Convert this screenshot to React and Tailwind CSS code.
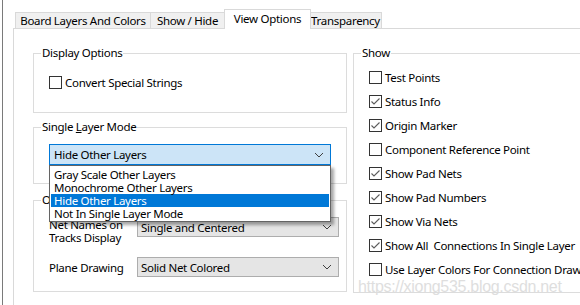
import React from 'react';

const tabs = [
  { label: 'Board Layers And Colors', w: 'w-[136px]' },
  { label: 'Show / Hide', w: 'w-[75px]' },
  { label: 'View Options', w: 'w-[87px]', active: true },
  { label: 'Transparency', w: 'w-[73px]' },
];

const showItems = [
  { label: 'Test Points', checked: false },
  { label: 'Status Info', checked: true },
  { label: 'Origin Marker', checked: true },
  { label: 'Component Reference Point', checked: false },
  { label: 'Show Pad Nets', checked: true },
  { label: 'Show Pad Numbers', checked: true },
  { label: 'Show Via Nets', checked: true },
  { label: 'Show All  Connections In Single Layer', checked: true },
  { label: 'Use Layer Colors For Connection Drawing', checked: false },
];

const layerModes = [
  'Gray Scale Other Layers',
  'Monochrome Other Layers',
  'Hide Other Layers',
  'Not In Single Layer Mode',
];

function Checkbox({ checked }) {
  return (
    <span className="w-[13px] h-[13px] shrink-0 border border-[#333333] bg-white flex items-center justify-center">
      {checked && (
        <svg width="11" height="11" viewBox="0 0 11 11">
          <path d="M1.5 5.5 L4 8 L9.5 2.5" fill="none" stroke="#5c5c5c" strokeWidth="1.1" />
        </svg>
      )}
    </span>
  );
}

function Chevron() {
  return (
    <svg width="10" height="6" viewBox="0 0 10 6" className="shrink-0">
      <path d="M1 1 L5 5 L9 1" fill="none" stroke="#404040" strokeWidth="1" />
    </svg>
  );
}

function Group({ legend, className, children }) {
  return (
    <fieldset className={`border border-[#dcdcdc] ${className}`}>
      <legend className="ml-[7px] px-[1px] leading-[16px] whitespace-nowrap">{legend}</legend>
      {children}
    </fieldset>
  );
}

function Combo({ value, className }) {
  return (
    <div className={`h-[20px] bg-[#e5e5e5] border border-[#adadad] flex items-center justify-between pl-[3px] pr-[6px] ${className}`}>
      <span>{value}</span>
      <Chevron />
    </div>
  );
}

export default function App() {
  return (
    <div className="w-[580px] h-[305px] overflow-hidden bg-white relative font-['Noto_Sans',sans-serif] text-[11.5px] tracking-[-0.3px] leading-[13px] text-black">
      <div className="ml-[2px] h-full border-l border-[#7a7a7a] pl-[10px] pt-[12px]">
        {/* Tabs */}
        <div className="flex ml-[2px] h-[16px] items-end whitespace-nowrap">
          {tabs.map((t) =>
            t.active ? (
              <div
                key={t.label}
                className={`${t.w} h-[20px] -mb-[1px] -mx-[1px] relative z-10 bg-white border border-b-0 border-[#d9d9d9] flex items-center justify-center pb-[2px]`}
              >
                {t.label}
              </div>
            ) : (
              <div
                key={t.label}
                className={`${t.w} h-[16px] bg-[#f0f0f0] border border-b-0 border-[#d9d9d9] -ml-[1px] first:ml-0 flex items-center justify-center`}
              >
                {t.label}
              </div>
            )
          )}
        </div>

        {/* Panel */}
        <div className="border-l border-t border-[#d9d9d9] h-[400px] pl-[19px] pt-[16px] flex gap-[6px]">
          {/* Left column */}
          <div className="w-[314px] shrink-0 flex flex-col">
            <Group legend="Display Options" className="h-[68px]">
              <div className="flex items-center gap-[3px] pl-[15px] mt-[15px]">
                <Checkbox checked={false} />
                <span>Convert Special Strings</span>
              </div>
            </Group>

            <Group
              legend={
                <>
                  Single <span className="underline">L</span>ayer Mode
                </>
              }
              className="h-[65px] mt-[6px]"
            >
              <div className="relative ml-[15px] mt-[9px] w-[282px] z-20">
                <div className="h-[21px] bg-[#cce4f7] border border-[#0078d7] flex items-center justify-between pl-[4px] pr-[6px]">
                  <span>Hide Other Layers</span>
                  <Chevron />
                </div>
                <div className="absolute left-0 top-full w-[282px] bg-white border border-[#646464] shadow-[3px_3px_3px_rgba(0,0,0,0.35)] pt-[2px] pb-[1px] px-[1px]">
                  {layerModes.map((m) => (
                    <div
                      key={m}
                      className={`h-[13px] leading-[13px] pl-[3px] ${m === 'Hide Other Layers' ? 'bg-[#0078d7] text-white' : ''}`}
                    >
                      {m}
                    </div>
                  ))}
                </div>
              </div>
            </Group>

            <Group legend="Other" className="h-[100px] mt-[8px]">
              <div className="pl-[15px] pr-[7px] mt-[9px] flex flex-col gap-[13px]">
                <div className="flex items-start">
                  <div className="w-[88px] pt-[1px]">
                    <div>Net Names on</div>
                    <div>Tracks Display</div>
                  </div>
                  <Combo value="Single and Centered" className="w-[202px]" />
                </div>
                <div className="flex items-center">
                  <div className="w-[88px]">Plane Drawing</div>
                  <Combo value="Solid Net Colored" className="w-[202px]" />
                </div>
              </div>
            </Group>

            <Group legend="Solder Mask" className="h-[60px] mt-[12px]" />
          </div>

          {/* Right column */}
          <div className="w-[260px] shrink-0">
            <Group legend="Show" className="h-[248px]">
              <div className="pl-[15px] mt-[10px] flex flex-col gap-[11px] whitespace-pre">
                {showItems.map((it) => (
                  <div key={it.label} className="flex items-center gap-[3px]">
                    <Checkbox checked={it.checked} />
                    <span>{it.label}</span>
                  </div>
                ))}
              </div>
            </Group>
          </div>
        </div>
      </div>

      <div className="absolute left-[358px] top-[278px] font-['Liberation_Sans',sans-serif] text-[16px] leading-[18px] text-[#dedede] pointer-events-none">
        https://xiong535.blog.csdn.net
      </div>
    </div>
  );
}
